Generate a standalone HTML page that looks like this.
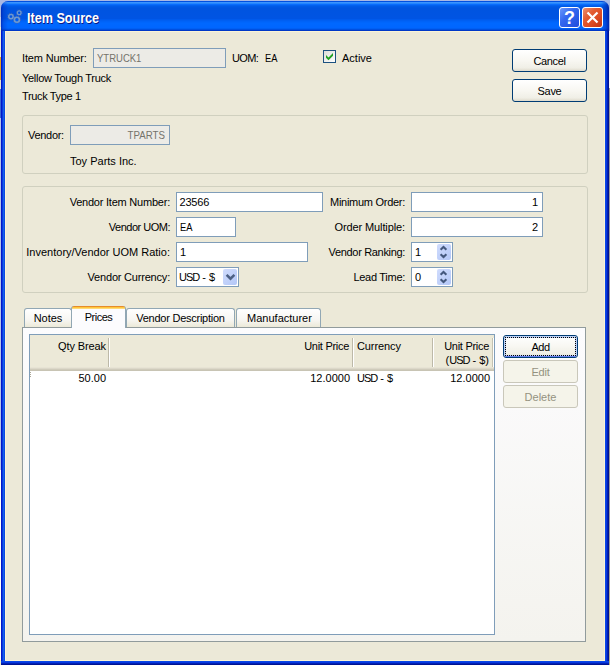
<!DOCTYPE html>
<html>
<head>
<meta charset="utf-8">
<title>Item Source</title>
<style>
html,body{margin:0;padding:0;}
body{width:610px;height:665px;overflow:hidden;position:relative;background:#fff;
  font-family:"Liberation Sans",sans-serif;font-size:11px;color:#000;}
.a{position:absolute;box-sizing:border-box;}
.t{position:absolute;white-space:nowrap;line-height:13px;height:13px;}
.r{text-align:right;}
#bgl{left:0;top:0;width:1px;height:665px;background:linear-gradient(#a9b8e4 0,#a9b8e4 17px,#c4d0f0 17px,#c4d0f0 27px,#f0ecd8 27px,#f0ecd8 57px,#e8a020 57px,#e8a020 80px,#e8e4d0 80px,#e8e4d0 89px,#3c66d8 89px,#3c66d8 118px,#b4c2ec 118px,#b4c2ec 470px,#fff 470px,#fff 660px,#f4f0c8 660px);}
#bgr{left:609px;top:0;width:1px;height:665px;background:linear-gradient(#a9b8e4 0,#a9b8e4 31px,#f4f4f8 31px,#f4f4f8 88px,#989898 88px,#989898 560px,#b5ad8c 600px);}
#bgt{left:0;top:0;width:610px;height:9px;background:#a9b8e4;}
#tb{left:1px;top:1px;width:608px;height:30px;border-radius:7px 7px 0 0;
 background:linear-gradient(#0050e0 0.5px,#3a93ff 1.5px,#2486fc 2.5px,#0a6cfc 3.5px,#0261ee 4.5px,#005ae6 5.5px,#0056e2 6.5px,#0054e0 7.5px,#0054e3 17.5px,#005aec 18.5px,#005ff2 19.5px,#0063f8 20.5px,#0066fc 21.5px,#0068ff 22.5px,#0066ff 26.5px,#0060f4 27.5px,#0050e0 28.5px,#0038c8 29.5px);}
#bl{left:1px;top:31px;width:4px;height:634px;background:linear-gradient(90deg,#0018c8 0,#0018c8 1px,#0838e0 1px,#0838e0 2px,#1660e8 2px,#1660e8 3px,#0a48e6 3px);}
#br{left:605px;top:31px;width:4px;height:634px;background:linear-gradient(90deg,#0a48e6 0,#0a48e6 1px,#0838e0 1px,#0838e0 2px,#0022b4 2px,#0022b4 3px,#001292 3px);}
#bb{left:1px;top:661px;width:608px;height:4px;background:linear-gradient(#0a48e6 0,#0a48e6 1px,#0838e0 1px,#0838e0 2px,#0022b4 2px,#0022b4 3px,#001292 3px);}
#ct{left:5px;top:31px;width:600px;height:630px;background:#ece9d8;border:1px solid #fbf4d6;}
#title{left:27px;top:10px;transform:scaleX(0.9);transform-origin:0 0;font-size:14px;font-weight:bold;color:#fff;line-height:16px;height:16px;text-shadow:1px 1px 0 #0a1883;}
.inp{border:1px solid #7f9db9;background:#fff;}
.dis{background:#ecebe6;color:#75736b;}
.btn{border:1px solid #003c74;border-radius:3px;background:linear-gradient(#ffffff 0,#f8f7f2 50%,#f0efe6 85%,#dedacc 100%);text-align:center;line-height:21px;padding-top:1px;}
.btn.off{border-color:#c9c7ba;background:#f5f4ea;color:#94927f;}
.grp{border:1px solid #d0d0bf;border-radius:3px;}
.tab{border:1px solid #91a7b4;border-bottom:none;border-radius:3px 3px 0 0;background:linear-gradient(#ffffff 0,#f7f6f2 60%,#ece9d8 100%);text-align:center;line-height:18px;}
.spn{border-radius:2px;background:linear-gradient(135deg,#d0dcfd,#b3c7f7);}
</style>
</head>
<body>
<div class="a" id="bgt"></div>
<div class="a" id="bgl"></div>
<div class="a" id="bgr"></div>
<div class="a" id="tb"></div>
<div class="a" style="left:1px;top:1px;width:608px;height:30px;border-radius:7px 7px 0 0;background:linear-gradient(90deg,rgba(0,30,170,0.75) 0,rgba(0,40,190,0.35) 2px,rgba(0,60,220,0) 7px,rgba(0,40,200,0) 600px,rgba(0,30,170,0.45) 605px,rgba(0,20,150,0.8) 608px);"></div>
<div class="a" id="bl"></div>
<div class="a" id="br"></div>
<div class="a" id="bb"></div>
<div class="a" id="ct"></div>
<svg class="a" style="left:5px;top:7px" width="22" height="20" viewBox="0 0 22 20">
  <g fill="none" stroke="#3a64b8" stroke-width="1.2" stroke-dasharray="1.1 1.1">
    <circle cx="5.95" cy="9.6" r="3.3"/><circle cx="14.2" cy="5.7" r="2.8"/><circle cx="11.9" cy="12.8" r="3.6"/>
  </g>
  <g fill="none" stroke="#7199cd">
    <circle cx="5.95" cy="9.6" r="2.2" stroke-width="1.5"/><circle cx="14.2" cy="5.7" r="1.85" stroke-width="1.3"/><circle cx="11.9" cy="12.8" r="2.5" stroke-width="1.6"/>
  </g>
</svg>
<div class="t" id="title">Item Source</div>

<!-- title buttons -->
<div class="a" style="left:559px;top:7px;width:21px;height:21px;border:1px solid #fff;border-radius:3px;background:linear-gradient(135deg,#6a98fb 0,#3468f0 40%,#1f4bdc 100%);"></div>
<div class="t" style="left:559px;top:9px;width:21px;height:19px;line-height:19px;text-align:center;color:#fff;font-weight:bold;font-size:18px;">?</div>
<div class="a" style="left:582px;top:7px;width:21px;height:21px;border:1px solid #fff;border-radius:3px;background:linear-gradient(135deg,#ee9070 0,#e35c32 35%,#dc4a22 65%,#c03412 100%);"></div>
<svg class="a" style="left:582px;top:7px" width="21" height="21" viewBox="0 0 21 21"><path d="M5.5 5.5 L15.5 15.5 M15.5 5.5 L5.5 15.5" stroke="#fff" stroke-width="2.2" fill="none"/></svg>

<!-- top section -->
<div class="t" style="left:22px;top:52px;letter-spacing:-0.16px;">Item Number:</div>
<div class="a inp dis" style="left:93px;top:48px;width:133px;height:20px;"></div>
<div class="t" style="left:97px;top:52px;color:#75736b;transform:scaleX(0.865);transform-origin:0 0;">YTRUCK1</div>
<div class="t" style="left:232px;top:52px;letter-spacing:-0.67px;">UOM:</div>
<div class="t" style="left:265px;top:52px;letter-spacing:0px;transform:scaleX(0.85);transform-origin:0 0;">EA</div>
<div class="a" style="left:323px;top:50px;width:13px;height:13px;border:1px solid #1c5180;background:linear-gradient(135deg,#dcdcd7,#fff);"></div>
<svg class="a" style="left:323px;top:50px" width="13" height="13" viewBox="0 0 13 13"><path d="M3 5 L5.5 7.5 L10 3 L10 5.7 L5.5 10.2 L3 7.7 Z" fill="#21a121"/></svg>
<div class="t" style="left:342px;top:52px;">Active</div>
<div class="t" style="left:22px;top:72px;letter-spacing:-0.29px;">Yellow Tough Truck</div>
<div class="t" style="left:22px;top:90px;letter-spacing:-0.36px;">Truck Type 1</div>
<div class="a btn" style="left:512px;top:49px;width:75px;height:23px;letter-spacing:-0.4px;">Cancel</div>
<div class="a btn" style="left:512px;top:79px;width:75px;height:23px;letter-spacing:-0.3px;">Save</div>

<!-- vendor group -->
<div class="a grp" style="left:22px;top:115px;width:566px;height:59px;"></div>
<div class="t" style="left:28px;top:129px;letter-spacing:-0.3px;">Vendor:</div>
<div class="a inp dis" style="left:70px;top:125px;width:100px;height:20px;"></div>
<div class="t r" style="left:70px;top:129px;width:95px;color:#75736b;transform:scaleX(0.885);transform-origin:100% 0;">TPARTS</div>
<div class="t" style="left:70px;top:155px;">Toy Parts Inc.</div>

<!-- details group -->
<div class="a grp" style="left:22px;top:186px;width:566px;height:107px;"></div>
<div class="t r" style="left:22px;top:196px;width:148px;letter-spacing:-0.22px;">Vendor Item Number:</div>
<div class="t r" style="left:22px;top:221px;width:148px;letter-spacing:-0.5px;">Vendor UOM:</div>
<div class="t r" style="left:22px;top:246px;width:148px;">Inventory/Vendor UOM Ratio:</div>
<div class="t r" style="left:22px;top:271px;width:148px;letter-spacing:-0.2px;">Vendor Currency:</div>
<div class="a inp" style="left:176px;top:192px;width:147px;height:20px;"></div>
<div class="t" style="left:179.5px;top:196px;letter-spacing:-0.2px;">23566</div>
<div class="a inp" style="left:176px;top:217px;width:60px;height:20px;"></div>
<div class="t" style="left:180px;top:221px;letter-spacing:0px;transform:scaleX(0.85);transform-origin:0 0;">EA</div>
<div class="a inp" style="left:176px;top:242px;width:132px;height:20px;"></div>
<div class="t" style="left:180px;top:246px;">1</div>
<div class="a inp" style="left:176px;top:267px;width:63px;height:20px;"></div>
<div class="t" style="left:179px;top:271px;"><span style="letter-spacing:-1px">USD</span> - $</div>
<div class="a spn" style="left:223px;top:269px;width:14px;height:16px;"></div>
<svg class="a" style="left:223px;top:269px" width="14" height="16" viewBox="0 0 14 16"><path d="M3.6 5.8 L7.5 9.7 L11.4 5.8" stroke="#4d6185" stroke-width="2.5" fill="none"/></svg>

<div class="t r" style="left:305px;top:196px;width:100px;letter-spacing:-0.28px;">Minimum Order:</div>
<div class="t r" style="left:305px;top:221px;width:100px;letter-spacing:-0.11px;">Order Multiple:</div>
<div class="t r" style="left:305px;top:246px;width:100px;letter-spacing:-0.33px;">Vendor Ranking:</div>
<div class="t r" style="left:305px;top:271px;width:100px;letter-spacing:-0.29px;">Lead Time:</div>
<div class="a inp" style="left:411px;top:192px;width:132px;height:20px;"></div>
<div class="t r" style="left:411px;top:196px;width:127px;">1</div>
<div class="a inp" style="left:411px;top:217px;width:132px;height:20px;"></div>
<div class="t r" style="left:411px;top:221px;width:127px;">2</div>
<div class="a inp" style="left:411px;top:242px;width:42px;height:20px;"></div>
<div class="t" style="left:415px;top:246px;">1</div>
<div class="a spn" style="left:437px;top:244px;width:14px;height:16px;"></div>
<svg class="a" style="left:437px;top:244px" width="14" height="16" viewBox="0 0 14 16"><path d="M3.6 5.7 L6.5 3 L9.4 5.7 M3.6 10.3 L6.5 13 L9.4 10.3" stroke="#44587d" stroke-width="2.1" fill="none"/></svg>
<div class="a inp" style="left:411px;top:267px;width:42px;height:20px;"></div>
<div class="t" style="left:415px;top:271px;">0</div>
<div class="a spn" style="left:437px;top:269px;width:14px;height:16px;"></div>
<svg class="a" style="left:437px;top:269px" width="14" height="16" viewBox="0 0 14 16"><path d="M3.6 5.7 L6.5 3 L9.4 5.7 M3.6 10.3 L6.5 13 L9.4 10.3" stroke="#44587d" stroke-width="2.1" fill="none"/></svg>

<!-- tabs -->
<div class="a" style="left:22px;top:327px;width:564px;height:315px;border:1px solid #919b9c;background:linear-gradient(#fcfcfe,#f4f3ee);"></div>
<div class="a tab" style="left:24px;top:308px;width:48px;height:19px;">Notes</div>
<div class="a tab" style="left:126px;top:308px;width:109px;height:19px;letter-spacing:-0.25px;">Vendor Description</div>
<div class="a tab" style="left:236px;top:308px;width:85px;height:19px;letter-spacing:0px;padding-left:2px;">Manufacturer</div>
<div class="a tab" style="left:71px;top:306px;width:55px;height:22px;background:linear-gradient(#e68b2c 0,#e68b2c 1px,#ffc73c 1px,#ffc73c 2px,#ffd978 2px,#ffd978 3px,#fcfcfe 3px);border-top:none;line-height:23px;letter-spacing:-0.5px;">Prices</div>

<!-- table -->
<div class="a" style="left:29px;top:334px;width:466px;height:301px;border:1px solid #7f9db9;background:#fff;"></div>
<div class="a" style="left:30px;top:335px;width:464px;height:36px;background:linear-gradient(#ece9d8 0,#ece9d8 32px,#e2ded0 33px,#d6d2c2 34px,#c8c4b4 35px);"></div>
<div class="a" style="left:108px;top:338px;width:2px;height:29px;background:linear-gradient(90deg,#bdb9a8 50%,#fff 50%);"></div>
<div class="a" style="left:352px;top:338px;width:2px;height:29px;background:linear-gradient(90deg,#bdb9a8 50%,#fff 50%);"></div>
<div class="a" style="left:432px;top:338px;width:2px;height:29px;background:linear-gradient(90deg,#bdb9a8 50%,#fff 50%);"></div>
<div class="a" style="left:492px;top:338px;width:2px;height:29px;background:linear-gradient(90deg,#c5c2b2 50%,#fff 50%);"></div>
<div class="t r" style="left:30px;top:340px;width:76px;letter-spacing:-0.1px;">Qty Break</div>
<div class="t r" style="left:250px;top:340px;width:99px;letter-spacing:-0.29px;">Unit Price</div>
<div class="t" style="left:357px;top:340px;letter-spacing:-0.1px;">Currency</div>
<div class="t r" style="left:389px;top:340px;width:100px;letter-spacing:-0.29px;">Unit Price</div>
<div class="t r" style="left:389px;top:354px;width:100px;">(<span style="letter-spacing:-1px">USD</span> - $)</div>
<div class="a" style="left:30px;top:372px;width:1px;height:5px;background:linear-gradient(#aca899 0,#aca899 1px,#fff 1px,#fff 2px,#aca899 2px,#aca899 3px,#fff 3px,#fff 4px,#aca899 4px);"></div>
<div class="t r" style="left:30px;top:372px;width:76px;">50.00</div>
<div class="t r" style="left:250px;top:372px;width:100px;">12.0000</div>
<div class="t" style="left:357px;top:372px;"><span style="letter-spacing:-1px">USD</span> - $</div>
<div class="t r" style="left:389px;top:372px;width:101px;">12.0000</div>

<div class="a btn" style="left:503px;top:335px;width:75px;height:23px;box-shadow:inset 0 0 0 2px #bdd0f5;letter-spacing:-0.5px;">Add</div>
<div class="a" style="left:505px;top:337px;width:71px;height:19px;border:1px dotted #000;"></div>
<div class="a" style="left:505px;top:356px;width:71px;height:1px;background:#6982ee;"></div>
<div class="a btn off" style="left:503px;top:360px;width:75px;height:23px;letter-spacing:-0.2px;">Edit</div>
<div class="a btn off" style="left:503px;top:385px;width:75px;height:23px;">Delete</div>
</body>
</html>
